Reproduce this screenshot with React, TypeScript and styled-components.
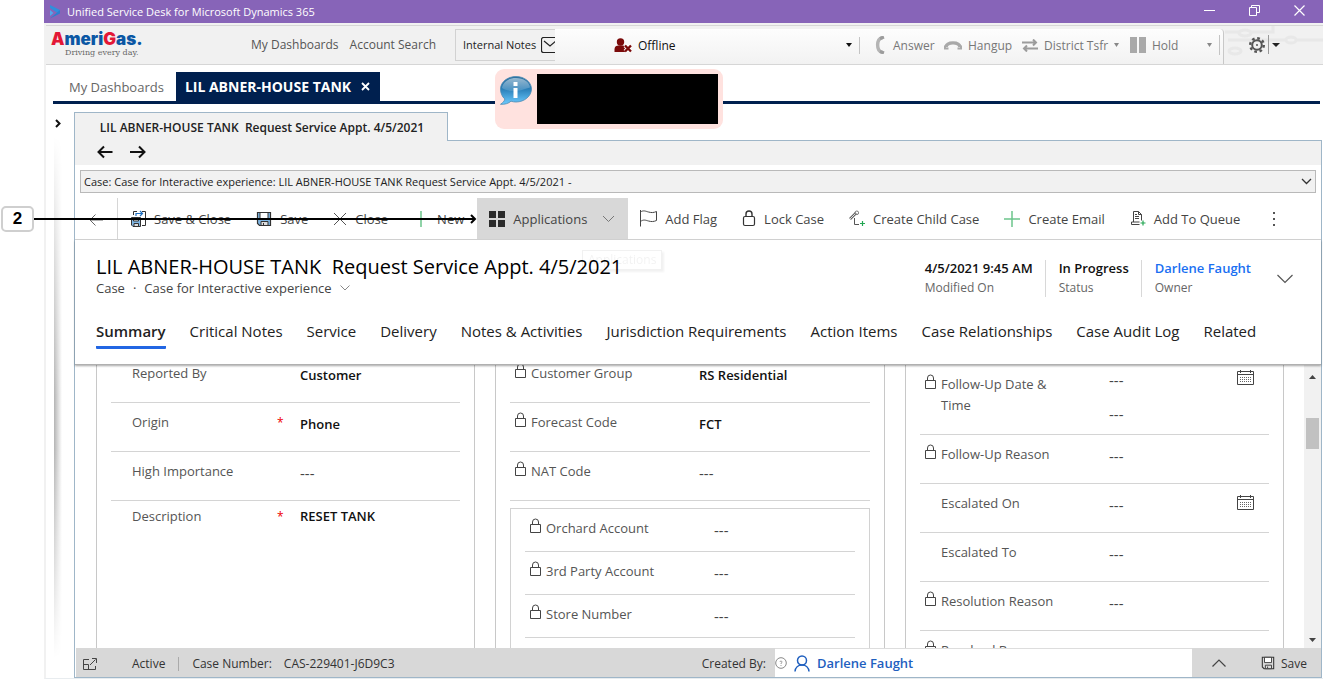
import React from "react";
import styled, { createGlobalStyle } from "styled-components";

const GlobalStyle = createGlobalStyle`
  *, *::before, *::after { box-sizing: border-box; }
  body {
    margin: 0;
    background: #fff;
    color: #333;
    font-family: "Open Sans", "Noto Sans", sans-serif;
    font-size: 13px;
    overflow: hidden;
  }
  button, select, input {
    font: inherit;
    color: inherit;
    border: 0;
    background: none;
    padding: 0;
    margin: 0;
    border-radius: 0;
  }
  select { appearance: none; }
  h1, p, dl, dd, dt { margin: 0; font-weight: inherit; }
  a { color: inherit; text-decoration: none; }
  svg { display: block; flex: none; }
`;

/* ---------- shell ---------- */

const Page = styled.div`
  position: relative;
  display: flex;
  height: 100vh;
  padding-left: 44px;
`;

const Callout = styled.div`
  position: absolute;
  z-index: 5;
  top: 206px;
  left: 1px;
  display: flex;
  align-items: center;
`;

const CalloutNumber = styled.span`
  width: 33px;
  height: 26px;
  border: 2px solid #cfcfcf;
  border-radius: 5px;
  background: #fff;
  color: #000;
  font: bold 17px/22px "Liberation Sans", Arial, sans-serif;
  text-align: center;
`;

const DeskWindow = styled.div`
  position: relative;
  flex: 1;
  min-width: 0;
  display: flex;
  flex-direction: column;
`;

const TitleBar = styled.header`
  flex: none;
  display: flex;
  align-items: center;
  height: 23px;
  padding: 0 18px 0 5px;
  background: #8764b8;
  color: #fff;
  font-size: 11px;
`;

const AppTitle = styled.span`
  flex: 1;
  margin-left: 6px;
`;

const WindowButtons = styled.div`
  display: flex;
  align-items: center;
  gap: 34px;
  padding-bottom: 2px;
`;

const WindowBody = styled.div`
  flex: 1;
  min-height: 0;
  display: flex;
  flex-direction: column;
  border-left: 2px solid #f1f1f1;
  border-bottom: 1px solid #e8ecef;
`;

/* ---------- agent bar ---------- */

const AgentBar = styled.div`
  position: relative;
  flex: none;
  display: flex;
  align-items: center;
  height: 42px;
  border-top: 2px solid #f1f1f1;
  border-bottom: 1px solid #d6d6d6;
  background: #f1f1f1;
  box-shadow: inset 0 1px 0 #d6d6d6;
  font-size: 12px;
  color: #555;
`;

const Logo = styled.div`
  width: 205px;
  padding-left: 5px;
`;

const LogoName = styled.div`
  color: #0b57a4;
  font: 900 17px/17px Inter, sans-serif;
`;

const LogoRed = styled.span`
  color: #e31836;
`;

const LogoTag = styled.div`
  padding-left: 14px;
  font: 8px/10px "DejaVu Serif", serif;
  color: #666;
`;

const TopLinks = styled.nav`
  display: flex;
  gap: 11px;
  width: 204px;
  white-space: nowrap;
`;

const NotesButton = styled.button`
  display: flex;
  align-items: center;
  gap: 5px;
  width: 100px;
  height: 32px;
  padding-left: 7px;
  border: 1px solid #d2d2d2;
  border-right: 0;
  overflow: hidden;
  white-space: nowrap;
  color: #222;
  font-size: 11px;
`;

const CallStrip = styled.div`
  flex: 1;
  z-index: 1;
  display: flex;
  align-items: center;
  align-self: flex-start;
  height: 35px;
  margin-top: 4px;
  padding: 0 3px 3px 0;
  border-right: 1px solid #c8c8c8;
  border-radius: 0 4px 0 0;
  background: linear-gradient(#fdfdfd, #f2f2f2);
  color: #777;
`;

const Presence = styled.label`
  flex: 1;
  display: flex;
  align-items: center;
  gap: 6px;
  padding: 0 7px 0 59px;
  color: #111;
`;

const PresenceSelect = styled.select`
  flex: 1;
`;

const Rule = styled.span<{ $h: number; $c?: string }>`
  flex: none;
  width: 1px;
  height: ${(p) => p.$h}px;
  background: ${(p) => p.$c ?? "#c4c4c4"};
`;

const CallButton = styled.button<{ $w: number }>`
  display: flex;
  align-items: center;
  gap: 6px;
  width: ${(p) => p.$w}px;
  white-space: nowrap;
`;

const GearButton = styled.button`
  z-index: 1;
  display: flex;
  align-items: center;
  gap: 3px;
  width: 99px;
  padding-left: 25px;
`;

const Circuit = styled.svg`
  position: absolute;
  right: 0;
  top: 1px;
`;

/* ---------- session tabs ---------- */

const SessionTabs = styled.nav`
  flex: none;
  display: flex;
  align-items: stretch;
  height: 39px;
  margin: 0 3px 0 7px;
  padding-top: 7px;
  border-bottom: 3px solid #00204f;
`;

const SessionTab = styled.button<{ $active?: boolean }>`
  display: flex;
  align-items: center;
  gap: 10px;
  padding: ${(p) => (p.$active ? "0 10px 0 9px" : "0 12px 0 16px")};
  background: ${(p) => (p.$active ? "#00204f" : "transparent")};
  color: ${(p) => (p.$active ? "#fff" : "#666")};
  font-size: ${(p) => (p.$active ? 14 : 13)}px;
  font-weight: ${(p) => (p.$active ? 700 : 400)};
  white-space: nowrap;
`;

const InfoBalloon = styled.aside`
  position: absolute;
  z-index: 4;
  left: 451px;
  top: 69px;
  display: flex;
  gap: 5px;
  padding: 5px;
  border-radius: 9px;
  background: #ffe2df;
`;

const Redacted = styled.div`
  width: 181px;
  height: 50px;
  background: #000;
`;

/* ---------- workspace ---------- */

const Workspace = styled.div`
  flex: 1;
  min-height: 0;
  display: flex;
  padding: 8px 1px 0 0;
`;

const SideRail = styled.aside`
  flex: none;
  width: 28px;
  display: flex;
  flex-direction: column;
  padding: 7px 0 0 8px;
`;

const RailButton = styled.button`
  width: 8px;
  height: 9px;
`;

const RailShadow = styled.div`
  flex: 1;
  width: 8px;
  margin: 8px 0 20px;
  background: linear-gradient(to right, #b4b4b4, #fff);
  mask-image: linear-gradient(transparent, #000 50%, #000 60%, transparent);
`;

const Panel = styled.main`
  flex: 1;
  min-width: 0;
  display: flex;
  flex-direction: column;
`;

const DocTabs = styled.div`
  flex: none;
  display: flex;
  height: 29px;
`;

const DocTab = styled.button`
  width: 374px;
  border: 1px solid #9fb6c8;
  border-bottom: 0;
  background: #f1f1f1;
  color: #222;
  font-size: 12px;
  font-weight: 600;
  white-space: pre;
  padding-left: 2px;
`;

const DocTabsRest = styled.div`
  flex: 1;
  border-bottom: 1px solid #9fb6c8;
`;

const PanelBody = styled.div`
  position: relative;
  flex: 1;
  min-height: 0;
  display: flex;
  flex-direction: column;
  border: 1px solid #9fb6c8;
  border-top: 0;
`;

const HistoryBar = styled.div`
  flex: none;
  display: flex;
  align-items: flex-start;
  gap: 17px;
  height: 24px;
  padding: 4px 22px;
  background: #f1f1f1;
`;

const PathField = styled.label`
  flex: none;
  display: flex;
  align-items: center;
  height: 23px;
  margin: 5px;
  padding: 0 3px 0 3px;
  border: 1px solid #b9b9b9;
  background: #f1f1f1;
  color: #222;
  font-size: 11px;
`;

const PathSelect = styled.select`
  flex: 1;
`;

const CommandBar = styled.div`
  flex: none;
  display: flex;
  height: 42px;
  border-bottom: 1px solid #d6d6d6;
`;

const BackButton = styled.button`
  display: flex;
  align-items: center;
  width: 43px;
  padding: 2px 0 0 14px;
  border-right: 1px solid #d6d6d6;
`;

const Command = styled.button<{ $active?: boolean }>`
  display: flex;
  align-items: center;
  gap: 8px;
  padding: 0 13px 0 12px;
  background: ${(p) => (p.$active ? "#d8d8d8" : "transparent")};
  color: #444;
  white-space: nowrap;
`;

const FaintTip = styled.div`
  position: absolute;
  z-index: 2;
  left: 507px;
  top: 109px;
  padding: 0 5px;
  border: 1px solid #000;
  box-shadow: 2px 2px 2px #000;
  font-size: 12px;
  line-height: 18px;
  color: #000;
  opacity: 0.05;
`;

const RecordHead = styled.section`
  position: relative;
  z-index: 1;
  flex: none;
  border-bottom: 1px solid #b0b0b0;
  box-shadow: 0 1px 2px rgba(0, 0, 0, 0.35);
  background: #fff;
`;

const HeadTop = styled.div`
  display: flex;
  justify-content: space-between;
  padding: 14px 28px 0 21px;
  height: 69px;
`;

const RecordTitle = styled.h1`
  color: #000;
  font-size: 20px;
  line-height: 26px;
  font-weight: 500;
  white-space: pre;
`;

const RecordKind = styled.p`
  display: flex;
  align-items: center;
  gap: 8px;
  line-height: 16px;
  color: #444;
`;

const Facts = styled.dl`
  display: flex;
  align-items: flex-start;
  padding-top: 6px;
`;

const Fact = styled.div`
  display: flex;
  flex-direction: column-reverse;
  height: 37px;
  padding: 0 12px 0 13px;
  border-left: 1px solid #d8d8d8;
  white-space: nowrap;
  &:first-child { border-left: 0; }
`;

const FactName = styled.dt`
  color: #666;
  font-size: 12px;
  line-height: 18px;
`;

const FactValue = styled.dd<{ $link?: boolean }>`
  color: ${(p) => (p.$link ? "#1a6ff2" : "#111")};
  font-weight: 600;
  line-height: 21px;
`;

const MoreButton = styled.button`
  margin: 14px 0 0 14px;
`;

const FormTabs = styled.nav`
  display: flex;
  gap: 24px;
  height: 55px;
  padding: 11px 0 0 21px;
`;

const FormTab = styled.button<{ $active?: boolean }>`
  height: 29px;
  padding-bottom: 5px;
  border-bottom: 3px solid ${(p) => (p.$active ? "#2266e3" : "transparent")};
  border-radius: 1px;
  color: #222;
  font-size: 15px;
  line-height: 20px;
  font-weight: ${(p) => (p.$active ? 600 : 400)};
  white-space: nowrap;
`;

/* ---------- form ---------- */

const FormScroll = styled.div`
  flex: 1;
  min-height: 0;
  display: flex;
  overflow: hidden;
`;

const Columns = styled.div`
  flex: 1;
  display: grid;
  grid-template-columns: 379fr 390fr 379fr;
  gap: 20px;
  margin-top: -11px;
  padding: 0 20px 0 21px;
`;

const Column = styled.section`
  min-width: 0;
  padding: 0 14px;
  border: 1px solid #c8c8c8;
  border-width: 0 1px;
`;

const SubCard = styled.div`
  margin-top: 7px;
  padding: 0 14px 20px;
  border: 1px solid #d2d2d2;
`;

const FieldRow = styled.div<{ $h: number; $pad: number; $open?: boolean }>`
  display: grid;
  grid-template-columns: 21px 134px 34px 1fr;
  height: ${(p) => p.$h}px;
  padding-top: ${(p) => p.$pad}px;
  border-bottom: 1px solid ${(p) => (p.$open ? "transparent" : "#d4d4d4")};
  line-height: 21px;
`;

const LockCell = styled.span<{ $drop: number }>`
  padding: ${(p) => p.$drop}px 0 0 4px;
`;

const FieldLabel = styled.span<{ $drop: number }>`
  padding-top: ${(p) => p.$drop}px;
  color: #555;
`;

const Required = styled.span`
  padding-left: 11px;
  color: #e00;
  font-size: 12px;
`;

const FieldValue = styled.div<{ $drop: number }>`
  display: flex;
  justify-content: space-between;
  padding: ${(p) => p.$drop}px 15px 0 0;
  color: #111;
  font-weight: 600;
`;

const Blank = styled.span`
  display: block;
  color: #444;
  font-size: 15px;
  font-weight: 400;
  & + & { padding-top: 13px; }
`;

const ScrollTrack = styled.div`
  flex: none;
  display: flex;
  flex-direction: column;
  align-items: center;
  width: 17px;
  padding: 10px 1px 6px;
  background: #f1f1f1;
`;

const ScrollThumb = styled.div`
  width: 13px;
  height: 31px;
  margin-top: 39px;
  margin-bottom: auto;
  background: #c1c1c1;
`;

/* ---------- footer ---------- */

const StatusBar = styled.footer`
  flex: none;
  z-index: 1;
  display: grid;
  grid-template-columns: 699fr 417fr 129fr;
  height: 29px;
  margin-left: 1px;
  background: #d8d8d8;
  font-size: 12px;
`;

const StatusInfo = styled.div`
  display: flex;
  align-items: center;
  padding: 2px 9px 0 7px;
  white-space: nowrap;
`;

const StatusText = styled.span<{ $l: number }>`
  margin-left: ${(p) => p.$l}px;
  &:last-child { margin-left: auto; }
`;

const Creator = styled.div`
  display: flex;
  align-items: center;
  gap: 7px;
  border-top: 1px solid #ddd;
  background: #fff;
  color: #1f5fbf;
  font-size: 13px;
  font-weight: 600;
`;

const StatusActions = styled.div`
  display: flex;
  align-items: center;
  justify-content: space-between;
  padding: 1px 14px 0 20px;
`;

const SaveButton = styled.button`
  display: flex;
  align-items: center;
  gap: 6px;
`;

/* ---------- icons ---------- */

const Line = ({ w, h, d, c = "#444", s = 1 }: { w: number; h: number; d: string; c?: string; s?: number }) => (
  <svg width={w} height={h} viewBox={`0 0 ${w} ${h}`} fill="none" stroke={c} strokeWidth={s} aria-hidden="true">
    <path d={d} />
  </svg>
);

const Caret = ({ c = "#111", w = 6, up }: { c?: string; w?: number; up?: boolean }) => (
  <svg width={w} height="4" viewBox="0 0 8 4" preserveAspectRatio="none" aria-hidden="true">
    <path d={up ? "M0 4h8L4 0z" : "M0 0h8L4 4z"} fill={c} />
  </svg>
);

const LockIcon = () => (
  <Line w={13} h={15} s={1} c="#444" d="M1.500 6.500h10v8h-10zM3.500 6.500V4a3 3 0 0 1 6 0v2.500" />
);

const CalendarIcon = () => (
  <svg width="17" height="16" viewBox="0 0 17 16" fill="none" stroke="#444" aria-hidden="true">
    <path d="M.5 1.500h16v13H.5z" />
    <path d="M.5 4.500h16" />
    <path d="M3.500 0v3M13.500 0v3" />
    <path d="M3 7.500h11M3 9.500h11M3 11.500h11" strokeDasharray="1 1" stroke="#666" />
  </svg>
);

const SaveIcon = ({ fill = "#7fb6e4", size = 16 }: { fill?: string; size?: number }) => (
  <svg width={size} height={size} viewBox="0 0 16 16" fill="none" stroke="#333" aria-hidden="true">
    <path d="M1.500 1.500h13v13h-11l-2-2z" fill={fill} strokeWidth="1.200" />
    <path d="M4 1.500h8v6H4z" fill="#fff" />
    <path d="M5 10.500h7v4H5z" fill="#ddd" />
    <path d="M7.500 12v2" />
  </svg>
);

const SaveCloseIcon = () => (
  <svg width="16" height="18" viewBox="0 0 16 18" fill="none" stroke="#333" aria-hidden="true">
    <path d="M3.500 5V1.500H7M12 1.500h3.500V15.500H12" />
    <path d="M6 6V3.500h6M10 1l2.500 2.500L10 6" stroke="#1f6fc0" strokeWidth="1.200" />
    <path d="M1.500 7.500h9v9h-7.500l-1.500-1.500z" fill="#7fb6e4" />
    <path d="M3.500 7.500h5v3.500h-5z" fill="#fff" />
    <path d="M4 13.500h4.500v3H4z" fill="#ddd" />
  </svg>
);

const GridIcon = () => (
  <svg width="16" height="16" viewBox="0 0 16 16" fill="#2b2b2b" aria-hidden="true">
    <path d="M0 0h7v7H0zM9 0h7v7H9zM0 9h7v7H0zM9 9h7v7H9z" />
  </svg>
);

const FlagIcon = () => (
  <Line w={17} h={17} d="M.5 0v16.500M.5 2c3-2 5-.8 8 0s5 .8 8-.5v9c-3 1.300-5 1.300-8 .5s-5-1.800-8 .5" />
);

const CommandLock = () => (
  <svg width="14" height="17" viewBox="0 0 14 17" fill="none" stroke="#333" aria-hidden="true">
    <rect x="1.500" y="6.500" width="11" height="9" rx="1.500" strokeWidth="1.200" />
    <path d="M4 6.500V4a3 3 0 0 1 6 0v2.500" strokeWidth="1.400" />
  </svg>
);

const ChildIcon = () => (
  <svg width="16" height="17" viewBox="0 0 16 17" fill="none" aria-hidden="true">
    <path d="M1 9 7 3" stroke="#666" strokeWidth="2.600" />
    <path d="M1 9 7 3" stroke="#ddd" />
    <circle cx="7.800" cy="2.800" r="1.800" stroke="#777" />
    <path d="M5.500 8v6.500H10" stroke="#555" />
    <path d="M13.500 11v5M11 13.500h5" stroke="#22a652" strokeWidth="1.200" />
  </svg>
);

const QueueIcon = () => (
  <svg width="16" height="17" viewBox="0 0 16 17" fill="none" stroke="#444" aria-hidden="true">
    <path d="M3.500 12v-10.500h5l3 3v6M8.500 1.500v3h3" />
    <path d="M5 4.500h2M5 6.500h4M5 8.500h4" />
    <path d="M9.500 14.500H1.500v-2.500h8" />
    <path d="M13 10.500v5M10.500 13h5" stroke="#22a652" strokeWidth="1.200" />
  </svg>
);

const Plus = () => <Line w={16} h={16} c="#6cc58c" s={1.5} d="M8 0v16M0 8h16" />;

const Agent = () => (
  <svg width="18" height="15" viewBox="0 0 18 15" aria-hidden="true">
    <circle cx="6.500" cy="4" r="3.700" fill="#7a0a0a" />
    <path d="M.5 14V11c0-2.500 2-3.500 4-3.500h4c2 0 3.500 1 3.500 3.500v3z" fill="#7a0a0a" />
    <path d="m11 7.500 6 6m0-6-6 6" stroke="#fff" strokeWidth="4" />
    <path d="m11 7.500 6 6m0-6-6 6" stroke="#7a0a0a" strokeWidth="2.400" />
  </svg>
);

const InfoIcon = () => (
  <svg width="32" height="32" viewBox="0 0 32 32" aria-hidden="true">
    <defs>
      <linearGradient id="bubble" x1="0" y1="0" x2="0" y2="1">
        <stop offset="0" stopColor="#2d6f9e" />
        <stop offset="0.450" stopColor="#2a7fb8" />
        <stop offset="1" stopColor="#6ccbff" />
      </linearGradient>
      <linearGradient id="gloss" x1="0" y1="0" x2="0" y2="1">
        <stop offset="0" stopColor="#fff" stopOpacity="0.500" />
        <stop offset="1" stopColor="#fff" stopOpacity="0.120" />
      </linearGradient>
    </defs>
    <path d="M16 2.500c8.500 0 15.500 5.600 15.500 12.500S24.500 28 16 28c-2 0-3.500-.3-5-.8C8.500 29.500 5 30.500.5 30.300c2.500-1.600 4-3.300 4.300-5.300C2 22.600.5 19 .5 15 .5 8.100 7.500 2.500 16 2.500z" fill="url(#bubble)" stroke="#4a8ab2" strokeWidth="0.800" />
    <path d="M16 4c7.500 0 13.500 4 14 9.500-5 1-8 3-14 3.500S5.500 16 2 14C3 8 8.500 4 16 4z" fill="url(#gloss)" />
    <path d="M13.500 8h4v4h-4zM13.500 14h4v10h-4z" fill="#fff" />
  </svg>
);

/* ---------- content ---------- */

type Field = {
  label: string;
  value?: string;
  locked?: boolean;
  required?: boolean;
  calendar?: boolean;
  double?: boolean;
  open?: boolean;
  h?: number;
  pad?: number;
  drop?: number;
  labelDrop?: number;
};

const column1: Field[] = [
  { label: "Reported By", value: "Customer" },
  { label: "Origin", value: "Phone", required: true },
  { label: "High Importance" },
  { label: "Description", value: "RESET TANK", required: true, open: true, pad: 5, drop: 0 },
];

const column2: Field[] = [
  { label: "Customer Group", value: "RS Residential", locked: true },
  { label: "Forecast Code", value: "FCT", locked: true },
  { label: "NAT Code", locked: true },
];

const accounts: Field[] = ["Orchard Account", "3rd Party Account", "Store Number"].map((label) => ({
  label,
  locked: true,
  h: 43,
  pad: 9,
}));

const column3: Field[] = [
  { label: "Follow-Up Date & Time", locked: true, calendar: true, double: true, h: 81, pad: 16, drop: 0, labelDrop: 4 },
  { label: "Follow-Up Reason", locked: true },
  { label: "Escalated On", calendar: true },
  { label: "Escalated To" },
  { label: "Resolution Reason", locked: true },
  { label: "Resolved By", locked: true, open: true },
];

const commands: [string, React.ReactNode][] = [
  ["Add Flag", <FlagIcon />],
  ["Lock Case", <CommandLock />],
  ["Create Child Case", <ChildIcon />],
  ["Create Email", <Plus />],
  ["Add To Queue", <QueueIcon />],
];

const formTabs = ["Summary", "Critical Notes", "Service", "Delivery", "Notes & Activities", "Jurisdiction Requirements", "Action Items", "Case Relationships", "Case Audit Log", "Related"];

const FieldLine = ({ f }: { f: Field }) => (
  <FieldRow $h={f.h ?? 49} $pad={f.pad ?? 9} $open={f.open}>
    <LockCell $drop={f.labelDrop ?? 0}>{f.locked && <LockIcon />}</LockCell>
    <FieldLabel $drop={f.labelDrop ?? 0}>{f.label}</FieldLabel>
    <Required>{f.required && "*"}</Required>
    <FieldValue $drop={f.drop ?? 2}>
      {f.value ?? (
        <div>
          <Blank>---</Blank>
          {f.double && <Blank>---</Blank>}
        </div>
      )}
      {f.calendar && <CalendarIcon />}
    </FieldValue>
  </FieldRow>
);

export default function App() {
  return (
    <Page>
      <GlobalStyle />
      <Callout>
        <CalloutNumber>2</CalloutNumber>
        <svg width="443" height="10" viewBox="0 0 443 10" fill="none" stroke="#000" strokeWidth="2" aria-hidden="true">
          <path d="M0 5h441M437 1l4 4-4 4" />
        </svg>
      </Callout>
      <DeskWindow>
        <TitleBar>
          <svg width="12" height="14" viewBox="0 0 12 14" aria-hidden="true">
            <path d="M1 0l10 5-2.500 3L1 3z" fill="#2f8fdc" />
            <path d="M1 13.500 11 5v3.500z" fill="#2b7fd0" />
            <path d="M1 5l3.500 3L1 11z" fill="#4fa8ec" />
          </svg>
          <AppTitle>Unified Service Desk for Microsoft Dynamics 365</AppTitle>
          <WindowButtons>
            <button aria-label="Minimize"><Line w={11} h={11} c="#fff" d="M0 5.500h11" /></button>
            <button aria-label="Restore"><Line w={11} h={11} c="#fff" d="M.5 2.500h7v8h-7zM2.500 2.500v-2h8v7h-3" /></button>
            <button aria-label="Close"><Line w={11} h={11} c="#fff" s={1.2} d="m.5.500 10 10m0-10-10 10" /></button>
          </WindowButtons>
        </TitleBar>
        <WindowBody>
          <AgentBar>
            <Circuit width="440" height="37" viewBox="0 0 440 37" fill="none" stroke="#e8e8e8" strokeWidth="3" aria-hidden="true">
              <path d="M342 6h15M368 6h22V0M345 14h58M413 14h27" />
              <ellipse cx="362" cy="7" rx="6" ry="3" />
              <ellipse cx="408" cy="14" rx="5" ry="3" />
              <ellipse cx="352" cy="25" rx="6" ry="3" />
            </Circuit>
            <Logo>
              <LogoName><LogoRed>A</LogoRed>meri<LogoRed>G</LogoRed>as.</LogoName>
              <LogoTag>Driving every day.</LogoTag>
            </Logo>
            <TopLinks>
              <a href="#dashboards">My Dashboards</a>
              <a href="#search">Account Search</a>
            </TopLinks>
            <NotesButton>
              Internal Notes
              <Line w={17} h={16} c="#222" s={1.2} d="M16.500.500h-14a2 2 0 0 0-2 2v11a2 2 0 0 0 2 2h14M3 4l6 5 6-5" />
            </NotesButton>
            <CallStrip>
              <Presence>
                <Agent />
                <PresenceSelect aria-label="Presence"><option>Offline</option></PresenceSelect>
                <Caret />
              </Presence>
              <Rule $h={17} />
              <CallButton $w={84}>
                <svg width="27" height="18" viewBox="0 0 27 18" fill="none" aria-hidden="true">
                  <path d="M22.500 1.500C16 3 16 15 22.500 16.500" stroke="#b4b4b4" strokeWidth="3.400" />
                  <path d="M20 2.500l4-1.500M20 15.500l4 1.500" stroke="#9c9c9c" strokeWidth="3" />
                </svg>
                Answer
              </CallButton>
              <CallButton $w={78}>
                <svg width="18" height="10" viewBox="0 0 18 10" fill="none" aria-hidden="true">
                  <path d="M2 7c1-5.500 13-5.500 14 0" stroke="#a9a9a9" strokeWidth="3.400" />
                  <path d="M1 5.500v3h3.500M17 5.500v3h-3.500" stroke="#a9a9a9" strokeWidth="2" />
                </svg>
                Hangup
              </CallButton>
              <CallButton $w={108}>
                <Line w={16} h={13} c="#9c9c9c" s={2} d="M0 3.500h14M11 .5l3 3-3 3M16 9.500H2M5 6.500l-3 3 3 3" />
                District Tsfr
                <Caret c="#888" w={5} />
              </CallButton>
              <CallButton $w={77}>
                <svg width="16" height="16" viewBox="0 0 16 16" fill="#a9a9a9" aria-hidden="true"><path d="M0 0h7v16H0zM9 0h7v16H9z" /></svg>
                Hold
              </CallButton>
              <CallButton $w={12} aria-label="More call actions"><Caret c="#888" w={5} /></CallButton>
              <Rule $h={20} />
            </CallStrip>
            <GearButton aria-label="Settings">
              <svg width="16" height="16" viewBox="0 0 16 16" fill="none" stroke="#555" aria-hidden="true">
                <circle cx="8" cy="8" r="4.800" strokeWidth="2" />
                <circle cx="8" cy="8" r="6.800" strokeWidth="2.400" strokeDasharray="2.670 2.670" />
                <circle cx="8" cy="8" r="1" fill="#555" stroke="none" />
              </svg>
              <Rule $h={19} $c="#999" />
              <Caret c="#222" w={8} />
            </GearButton>
          </AgentBar>
          <SessionTabs>
            <SessionTab>My Dashboards</SessionTab>
            <SessionTab $active>
              LIL ABNER-HOUSE TANK
              <Line w={9} h={9} c="#fff" s={1.8} d="m1 1 7 7m0-7-7 7" />
            </SessionTab>
          </SessionTabs>
          <Workspace>
            <SideRail>
              <RailButton aria-label="Expand side panel"><Line w={8} h={9} c="#111" s={2} d="m2 1 3.500 3.500L2 8" /></RailButton>
              <RailShadow />
            </SideRail>
            <Panel>
              <DocTabs>
                <DocTab>{"LIL ABNER-HOUSE TANK  Request Service Appt. 4/5/2021"}</DocTab>
                <DocTabsRest />
              </DocTabs>
              <PanelBody>
                <HistoryBar>
                  <button aria-label="Back"><Line w={16} h={14} c="#111" s={2} d="M15.500 7H2M7 1.500 1.500 7 7 12.500" /></button>
                  <button aria-label="Forward"><Line w={16} h={14} c="#111" s={2} d="M0 7h14M9 1.500 14.500 7 9 12.500" /></button>
                </HistoryBar>
                <PathField>
                  <PathSelect aria-label="Case path">
                    <option>Case: Case for Interactive experience: LIL ABNER-HOUSE TANK Request Service Appt. 4/5/2021 -</option>
                  </PathSelect>
                  <Line w={11} h={7} c="#333" s={1.3} d="m1 1 4.500 4.500L10 1" />
                </PathField>
                <CommandBar>
                  <BackButton aria-label="Go back"><Line w={14} h={12} c="#666" d="M14 6H1M6.500.500 1 6l5.500 5.500" /></BackButton>
                  <Command><SaveCloseIcon />Save &amp; Close</Command>
                  <Command><SaveIcon />Save</Command>
                  <Command><Line w={14} h={14} c="#555" d="m1 1 12 12M13 1 1 13" />Close</Command>
                  <Command><Plus />New</Command>
                  <Command $active>
                    <GridIcon />Applications
                    <Line w={20} h={8} c="#777" d="m8 1 5.500 5.500L19 1" />
                  </Command>
                  {commands.map(([name, icon]) => (
                    <Command key={name}>{icon}{name}</Command>
                  ))}
                  <Command aria-label="More commands">
                    <svg width="16" height="16" viewBox="0 0 16 16" fill="#555" aria-hidden="true"><path d="M8 1h2v2H8zM8 7h2v2H8zM8 13h2v2H8z" /></svg>
                  </Command>
                </CommandBar>
                <FaintTip>Applications</FaintTip>
                <RecordHead>
                  <HeadTop>
                    <div>
                      <RecordTitle>{"LIL ABNER-HOUSE TANK  Request Service Appt. 4/5/2021"}</RecordTitle>
                      <RecordKind>
                        <span>Case</span><span>·</span><span>Case for Interactive experience</span>
                        <Line w={10} h={6} c="#888" d="m.5.500 4.500 4.500L9.500.500" />
                      </RecordKind>
                    </div>
                    <Facts>
                      <Fact><FactName>Modified On</FactName><FactValue>4/5/2021 9:45 AM</FactValue></Fact>
                      <Fact><FactName>Status</FactName><FactValue>In Progress</FactValue></Fact>
                      <Fact><FactName>Owner</FactName><FactValue $link><a href="#owner">Darlene Faught</a></FactValue></Fact>
                      <MoreButton aria-label="Show more header fields"><Line w={16} h={10} c="#555" s={1.2} d="m.5 1 7.500 7.500L15.500 1" /></MoreButton>
                    </Facts>
                  </HeadTop>
                  <FormTabs>
                    {formTabs.map((name, i) => (
                      <FormTab key={name} $active={i === 0}>{name}</FormTab>
                    ))}
                  </FormTabs>
                </RecordHead>
                <FormScroll>
                  <Columns>
                    <Column>{column1.map((f) => <FieldLine key={f.label} f={f} />)}</Column>
                    <Column>
                      <div>{column2.map((f) => <FieldLine key={f.label} f={f} />)}</div>
                      <SubCard>{accounts.map((f) => <FieldLine key={f.label} f={f} />)}</SubCard>
                    </Column>
                    <Column>{column3.map((f) => <FieldLine key={f.label} f={f} />)}</Column>
                  </Columns>
                  <ScrollTrack>
                    <Caret c="#444" w={7} up />
                    <ScrollThumb />
                    <Caret c="#444" w={7} />
                  </ScrollTrack>
                </FormScroll>
                <StatusBar>
                  <StatusInfo>
                    <Line w={14} h={12} c="#444" d="M6 1.500H.5v10h12V8M.5 6.500h5v5M7 7l5.500-5.500M9 .5h4.500V5" />
                    <StatusText $l={35}>Active</StatusText>
                    <StatusText $l={13}><Rule $h={14} $c="#aaa" as="div" /></StatusText>
                    <StatusText $l={13}>Case Number:</StatusText>
                    <StatusText $l={12}>CAS-229401-J6D9C3</StatusText>
                    <StatusText $l={0}>Created By:</StatusText>
                  </StatusInfo>
                  <Creator>
                    <svg width="12" height="12" viewBox="0 0 12 12" fill="none" stroke="#888" aria-hidden="true">
                      <circle cx="6" cy="6" r="5.300" />
                      <path d="M5 5a1 1 0 1 1 1.200 1L6 7M6 8v1" strokeWidth="0.800" />
                    </svg>
                    <svg width="16" height="17" viewBox="0 0 16 17" fill="none" stroke="#1f5fbf" strokeWidth="1.500" aria-hidden="true">
                      <circle cx="8" cy="5.500" r="4.500" />
                      <path d="M1 16.500c.3-4 3.200-6.500 7-6.500s6.700 2.500 7 6.500" />
                    </svg>
                    <a href="#creator">Darlene Faught</a>
                  </Creator>
                  <StatusActions>
                    <button aria-label="Expand footer"><Line w={14} h={8} c="#444" s={1.2} d="m.5 7.500 6.500-6.500 6.500 6.500" /></button>
                    <SaveButton><SaveIcon fill="#d8d8d8" size={14} />Save</SaveButton>
                  </StatusActions>
                </StatusBar>
              </PanelBody>
            </Panel>
          </Workspace>
        </WindowBody>
        <InfoBalloon aria-label="Notification"><InfoIcon /><Redacted /></InfoBalloon>
      </DeskWindow>
    </Page>
  );
}
